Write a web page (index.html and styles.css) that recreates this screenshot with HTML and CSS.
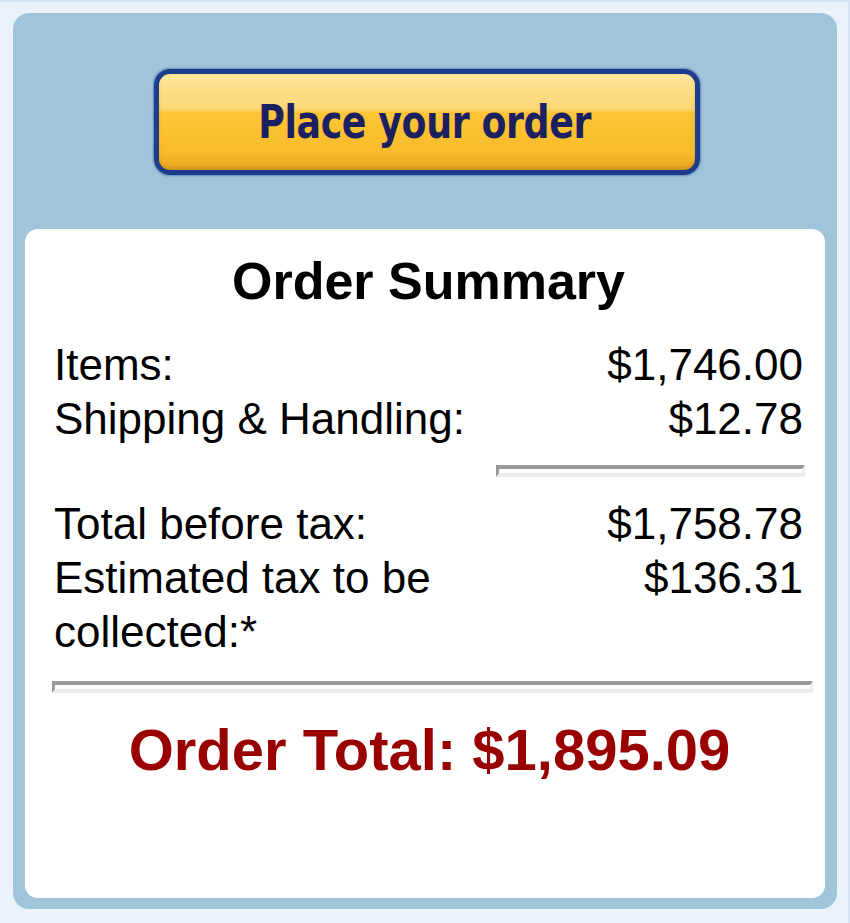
FILE: index.html
```html
<!DOCTYPE html>
<html lang="en">
<head>
<meta charset="utf-8">
<title>Order Summary</title>
<link rel="stylesheet" href="styles.css">
</head>
<body>
<div class="frame">
  <div class="panel">
    <div class="btn-wrap">
      <button class="place-btn" type="button"><span class="place-label">Place your order</span></button>
    </div>
    <div class="card">
      <h2 class="title">Order Summary</h2>
      <div class="rows">
        <div class="row"><span class="label">Items:</span><span class="amount">$1,746.00</span></div>
        <div class="row"><span class="label">Shipping &amp; Handling:</span><span class="amount">$12.78</span></div>
      </div>
      <hr class="rule rule-short">
      <div class="rows">
        <div class="row"><span class="label">Total before tax:</span><span class="amount">$1,758.78</span></div>
        <div class="row"><span class="label">Estimated tax to be collected:*</span><span class="amount">$136.31</span></div>
      </div>
      <hr class="rule rule-full">
      <div class="total">Order Total: $1,895.09</div>
    </div>
  </div>
</div>
</body>
</html>
```

FILE: styles.css
```css
html, body {
  margin: 0;
  padding: 0;
  background: #eaf3fc;
}

.frame {
  box-sizing: border-box;
  width: 850px;
  height: 923px;
  padding: 11px 11px 14px 13px;
  border-top: 2px solid #d3e3f1;
  border-right: 2px solid #d3e3f1;
  display: flex;
}

.panel {
  flex: 1;
  display: flex;
  flex-direction: column;
  background: #a0c4d9;
  border-radius: 16px;
  padding: 56px 12px 11px 12px;
}

.btn-wrap {
  display: flex;
  justify-content: center;
}

.place-btn {
  box-sizing: border-box;
  width: 546px;
  height: 106px;
  margin-left: 3px;
  padding: 0 0 1px 0;
  border: 5px solid #1b3d8c;
  border-radius: 16px;
  background: linear-gradient(to bottom,
    #fde79c 0%, #fdde86 18%, #fcd777 36%,
    #fdc53a 40%, #fcc12f 60%, #f7bb2c 82%, #e9aa23 96%, #d79a1e 100%);
  box-shadow: 0 0 2px 1px rgba(27, 61, 140, 0.45), inset 0 -3px 3px rgba(190, 130, 20, 0.35);
  display: flex;
  align-items: center;
  justify-content: center;
  cursor: pointer;
}

.place-label {
  display: inline-block;
  font-family: "DejaVu Sans", "Liberation Sans", sans-serif;
  font-weight: bold;
  font-size: 46px;
  letter-spacing: -0.5px;
  color: #1c1f60;
  transform: scaleX(0.79);
  line-height: 1;
  margin-right: 4px;
}

.card {
  flex: 1;
  margin-top: 54px;
  background: #ffffff;
  border-radius: 13px;
  padding: 22px 22px 0 29px;
  font-family: "Liberation Sans", Arial, sans-serif;
  color: #000;
}

.title {
  margin: 0 0 27px 0;
  text-align: center;
  font-size: 52px;
  line-height: 60px;
  font-weight: bold;
}

.rows {
  display: flex;
  flex-direction: column;
}

.row {
  display: grid;
  grid-template-columns: 430px 1fr;
  font-size: 44px;
  line-height: 54px;
}

.amount {
  text-align: right;
}

.rule {
  box-sizing: content-box;
  height: 4px;
  margin: 0;
  border-style: solid;
  border-width: 4px 3px 4px 3px;
  border-color: #999999 #ececec #ececec #999999;
  background: #ffffff;
}

.rule-short {
  width: 303px;
  margin: 19px -2px 20px auto;
}

.rule-full {
  margin: 22px -10px 24px -2px;
}

.total {
  text-align: center;
  font-size: 58px;
  line-height: 66px;
  font-weight: bold;
  color: #990000;
  padding-left: 2px;
}
```
